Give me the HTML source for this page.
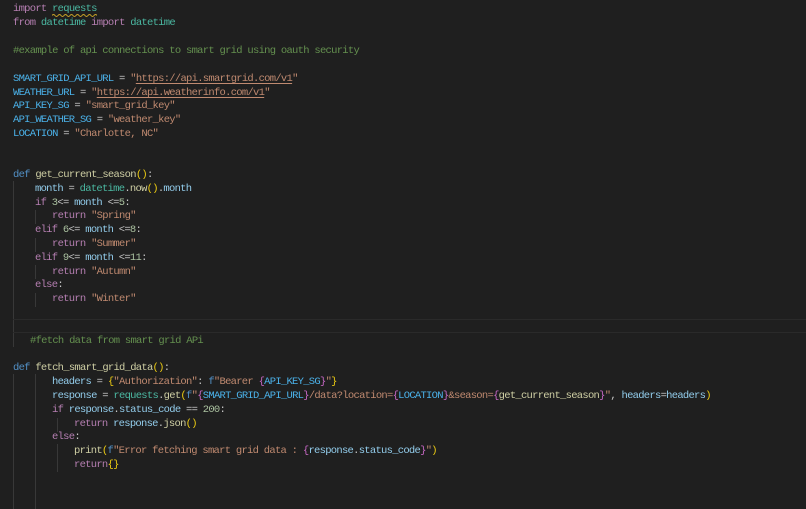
<!DOCTYPE html>
<html><head><meta charset="utf-8">
<style>
html,body{margin:0;padding:0;width:806px;height:509px;overflow:hidden;background:#1f1f1f}
#c{position:absolute;left:0;top:0;width:806px;height:509px;filter:blur(0.35px)}
.l{position:absolute;margin-top:1px;white-space:pre;font-family:"Liberation Mono",monospace;font-size:10.5px;letter-spacing:-0.72px;line-height:14px;height:14px;color:#c8c8c8}
.k{color:#b67fb2}.t{color:#4bb8a2}.c{color:#64904f}.v{color:#4bb2ea}.s{color:#c08a70}.d{color:#5290c6}.f{color:#cfcfa4}.y{color:#eccb12}.p{color:#c868c6}.b{color:#93cdec}.n{color:#abc2a0}
.u{text-decoration:underline;text-underline-offset:2px;text-decoration-thickness:1px}
.g{position:absolute;width:1px;background:#383838}
.h{position:absolute;left:13px;width:793px;height:1px;background:#2a2a2a}
</style></head><body><div id="c">
<div class="g" style="left:13px;top:181px;height:166px"></div>
<div class="g" style="left:35px;top:210px;height:14px"></div>
<div class="g" style="left:35px;top:238px;height:14px"></div>
<div class="g" style="left:35px;top:265px;height:14px"></div>
<div class="g" style="left:35px;top:293px;height:14px"></div>
<div class="g" style="left:13px;top:374px;height:135px"></div>
<div class="g" style="left:35px;top:374px;height:135px"></div>
<div class="g" style="left:57px;top:418px;height:14px"></div>
<div class="g" style="left:57px;top:444px;height:28px"></div>
<div class="h" style="top:319px"></div>
<div class="h" style="top:332px"></div>
<svg style="position:absolute;left:52px;top:13px" width="45" height="4" viewBox="0 0 45 4"><path d="M0 2.5 Q1.5 0.5 3 2.5 T6 2.5 T9 2.5 T12 2.5 T15 2.5 T18 2.5 T21 2.5 T24 2.5 T27 2.5 T30 2.5 T33 2.5 T36 2.5 T39 2.5 T42 2.5 T45 2.5" fill="none" stroke="#c9a227" stroke-width="1"/></svg>

<div class="l" style="left:13px;top:1px"><span class="k">import</span> <span class="t">requests</span></div>
<div class="l" style="left:13px;top:15px"><span class="k">from</span> <span class="t">datetime</span> <span class="k">import</span> <span class="t">datetime</span></div>
<div class="l" style="left:13px;top:43px"><span class="c">#example of api connections to smart grid using oauth security</span></div>
<div class="l" style="left:13px;top:71px"><span class="v">SMART_GRID_API_URL</span> = <span class="s">"<span class="u">https://api.smartgrid.com/v1</span>"</span></div>
<div class="l" style="left:13px;top:85px"><span class="v">WEATHER_URL</span> = <span class="s">"<span class="u">https://api.weatherinfo.com/v1</span>"</span></div>
<div class="l" style="left:13px;top:98px"><span class="v">API_KEY_SG</span> = <span class="s">"smart_grid_key"</span></div>
<div class="l" style="left:13px;top:112px"><span class="v">API_WEATHER_SG</span> = <span class="s">"weather_key"</span></div>
<div class="l" style="left:13px;top:126px"><span class="v">LOCATION</span> = <span class="s">"Charlotte, NC"</span></div>

<div class="l" style="left:13px;top:167px"><span class="d">def</span> <span class="f">get_current_season</span><span class="y">()</span>:</div>
<div class="l" style="left:35px;top:181px"><span class="b">month</span> = <span class="t">datetime</span>.<span class="f">now</span><span class="y">()</span>.<span class="b">month</span></div>
<div class="l" style="left:35px;top:195px"><span class="k">if</span> <span class="n">3</span>&lt;= <span class="b">month</span> &lt;=<span class="n">5</span>:</div>
<div class="l" style="left:52px;top:208px"><span class="k">return</span> <span class="s">"Spring"</span></div>
<div class="l" style="left:35px;top:222px"><span class="k">elif</span> <span class="n">6</span>&lt;= <span class="b">month</span> &lt;=<span class="n">8</span>:</div>
<div class="l" style="left:52px;top:236px"><span class="k">return</span> <span class="s">"Summer"</span></div>
<div class="l" style="left:35px;top:250px"><span class="k">elif</span> <span class="n">9</span>&lt;= <span class="b">month</span> &lt;=<span class="n">11</span>:</div>
<div class="l" style="left:52px;top:264px"><span class="k">return</span> <span class="s">"Autumn"</span></div>
<div class="l" style="left:35px;top:277px"><span class="k">else</span>:</div>
<div class="l" style="left:52px;top:291px"><span class="k">return</span> <span class="s">"Winter"</span></div>

<div class="l" style="left:30px;top:333px"><span class="c">#fetch data from smart grid APi</span></div>

<div class="l" style="left:13px;top:360px"><span class="d">def</span> <span class="f">fetch_smart_grid_data</span><span class="y">()</span>:</div>
<div class="l" style="left:52px;top:374px"><span class="b">headers</span> = <span class="y">{</span><span class="s">"Authorization"</span>: <span class="d">f</span><span class="s">"Bearer </span><span class="p">{</span><span class="v">API_KEY_SG</span><span class="p">}</span><span class="s">"</span><span class="y">}</span></div>
<div class="l" style="left:52px;top:388px"><span class="b">response</span> = <span class="t">requests</span>.<span class="f">get</span><span class="y">(</span><span class="d">f</span><span class="s">"</span><span class="p">{</span><span class="v">SMART_GRID_API_URL</span><span class="p">}</span><span class="s">/data?location=</span><span class="p">{</span><span class="v">LOCATION</span><span class="p">}</span><span class="s">&amp;season=</span><span class="p">{</span><span class="f">get_current_season</span><span class="p">}</span><span class="s">"</span>, <span class="b">headers</span>=<span class="b">headers</span><span class="y">)</span></div>
<div class="l" style="left:52px;top:402px"><span class="k">if</span> <span class="b">response</span>.<span class="b">status_code</span> == <span class="n">200</span>:</div>
<div class="l" style="left:74px;top:416px"><span class="k">return</span> <span class="b">response</span>.<span class="f">json</span><span class="y">()</span></div>
<div class="l" style="left:52px;top:429px"><span class="k">else</span>:</div>
<div class="l" style="left:74px;top:443px"><span class="f">print</span><span class="y">(</span><span class="d">f</span><span class="s">"Error fetching smart grid data : </span><span class="p">{</span><span class="b">response</span>.<span class="b">status_code</span><span class="p">}</span><span class="s">"</span><span class="y">)</span></div>
<div class="l" style="left:74px;top:457px"><span class="k">return</span><span class="y">{}</span></div>
</div></body></html>
